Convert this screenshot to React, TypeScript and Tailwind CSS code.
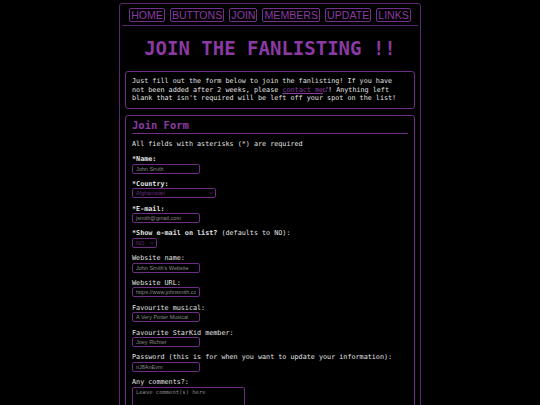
import React from "react";

const mono = { fontFamily: '"DejaVu Sans Mono", "Liberation Mono", monospace' };
const sans = { fontFamily: '"Liberation Sans", Arial, sans-serif' };

const navItems = ["HOME", "BUTTONS", "JOIN", "MEMBERS", "UPDATE", "LINKS"];

function TextField({ placeholder, width = "w-[68px]" }: { placeholder: string; width?: string }) {
  return (
    <input
      readOnly
      placeholder={placeholder}
      style={sans}
      className={`block ${width} h-[10px] rounded-[2px] border border-[#6e2c85] bg-black px-[3px] text-[5.5px] leading-[8px] text-[#9a9a9a] placeholder:text-[#8a8a8a] outline-none`}
    />
  );
}

function SelectField({ value, width }: { value: string; width: string }) {
  return (
    <div className={`relative ${width} h-[10px]`}>
      <select
        style={sans}
        defaultValue={value}
        className="block h-[10px] w-full appearance-none rounded-[2px] border border-[#6e2c85] bg-black px-[3px] py-0 text-[5.5px] leading-[8px] text-[#6a2a80] outline-none"
      >
        <option>{value}</option>
      </select>
      <svg
        viewBox="0 0 10 10"
        className="pointer-events-none absolute right-[3px] top-[3px] h-[4px] w-[4px]"
      >
        <path d="M1 3 L5 7 L9 3" fill="none" stroke="#7a3290" strokeWidth="1.6" />
      </svg>
    </div>
  );
}

function Field({ label, children }: { label: React.ReactNode; children: React.ReactNode }) {
  return (
    <div className="mb-[6.3px]">
      <div className="text-[6.75px] leading-[8.5px] text-[#e2e2e2]">{label}</div>
      {children}
    </div>
  );
}

export default function App() {
  return (
    <div className="min-h-screen bg-black pt-[3px]" style={mono}>
      <div className="mx-auto w-[302px] rounded-[3px] border border-[#5a2870] px-[2px]">
        <nav className="flex justify-center gap-[5px] border-b border-[#5a2870] pt-[4px] pb-[3px]">
          {navItems.map((n) => (
            <a
              key={n}
              style={sans}
              className="rounded-[2px] border border-[#74308c] px-[1px] text-[10.6px] leading-[12px] text-[#8c3aa4]"
            >
              {n}
            </a>
          ))}
        </nav>

        <h1 className="mt-[11px] mb-[12px] text-center text-[19px] font-bold leading-[22px] text-[#8a3aa2]">
          JOIN THE FANLISTING !!
        </h1>

        <div className="px-[3px] pb-[6px]">
          <div className="rounded-[3px] border border-[#6e2c85] px-[6px] py-[5px] text-[6.75px] leading-[8.5px] text-[#e0e0e0]">
            Just fill out the form below to join the fanlisting! If you have not been added after 2
            weeks, please{" "}
            <a className="text-[#8a3aa2] underline">
              contact me
              <svg viewBox="0 0 10 10" className="inline-block h-[5px] w-[5px] align-baseline">
                <path d="M6 1 H9 V4 M9 1 L4.5 5.5" fill="none" stroke="#8a3aa2" strokeWidth="1.2" />
                <path d="M7 6 V9 H1 V3 H4" fill="none" stroke="#8a3aa2" strokeWidth="1.2" />
              </svg>
            </a>
            ! Anything left blank that isn't required will be left off your spot on the list!
          </div>

          <div className="mt-[6px] rounded-[3px] border border-[#6e2c85] px-[6px] pt-[3px] pb-[8px]">
            <h2 className="border-b border-[#6e2c85] pb-[1px] text-[10.5px] font-bold leading-[13px] text-[#8a3aa2]">
              Join Form
            </h2>
            <p className="mt-[6px] mb-[7px] text-[6.75px] leading-[8.5px] text-[#e0e0e0]">
              All fields with asterisks (*) are required
            </p>

            <Field label={<b>*Name:</b>}>
              <TextField placeholder="John Smith" />
            </Field>
            <Field label={<b>*Country:</b>}>
              <SelectField value="Afghanistan" width="w-[84px]" />
            </Field>
            <Field label={<b>*E-mail:</b>}>
              <TextField placeholder="jsmith@gmail.com" />
            </Field>
            <Field
              label={
                <>
                  <b>*Show e-mail on list?</b> (defaults to NO):
                </>
              }
            >
              <SelectField value="NO" width="w-[25px]" />
            </Field>
            <Field label="Website name:">
              <TextField placeholder="John Smith's Website" />
            </Field>
            <Field label="Website URL:">
              <TextField placeholder="https://www.johnsmith.com" />
            </Field>
            <Field label="Favourite musical:">
              <TextField placeholder="A Very Potter Musical" />
            </Field>
            <Field label="Favourite StarKid member:">
              <TextField placeholder="Joey Richter" />
            </Field>
            <Field label="Password (this is for when you want to update your information):">
              <TextField placeholder="nJ8AnEvm" />
            </Field>
            <Field label="Any comments?:">
              <textarea
                readOnly
                placeholder="Leave comment(s) here"
                style={mono}
                className="block h-[34px] w-[113px] resize-none rounded-[2px] border border-[#6e2c85] bg-black px-[3px] py-[1px] text-[5.5px] leading-[7px] text-[#9a9a9a] placeholder:text-[#8a8a8a] outline-none"
              />
            </Field>
          </div>
        </div>
      </div>
    </div>
  );
}
